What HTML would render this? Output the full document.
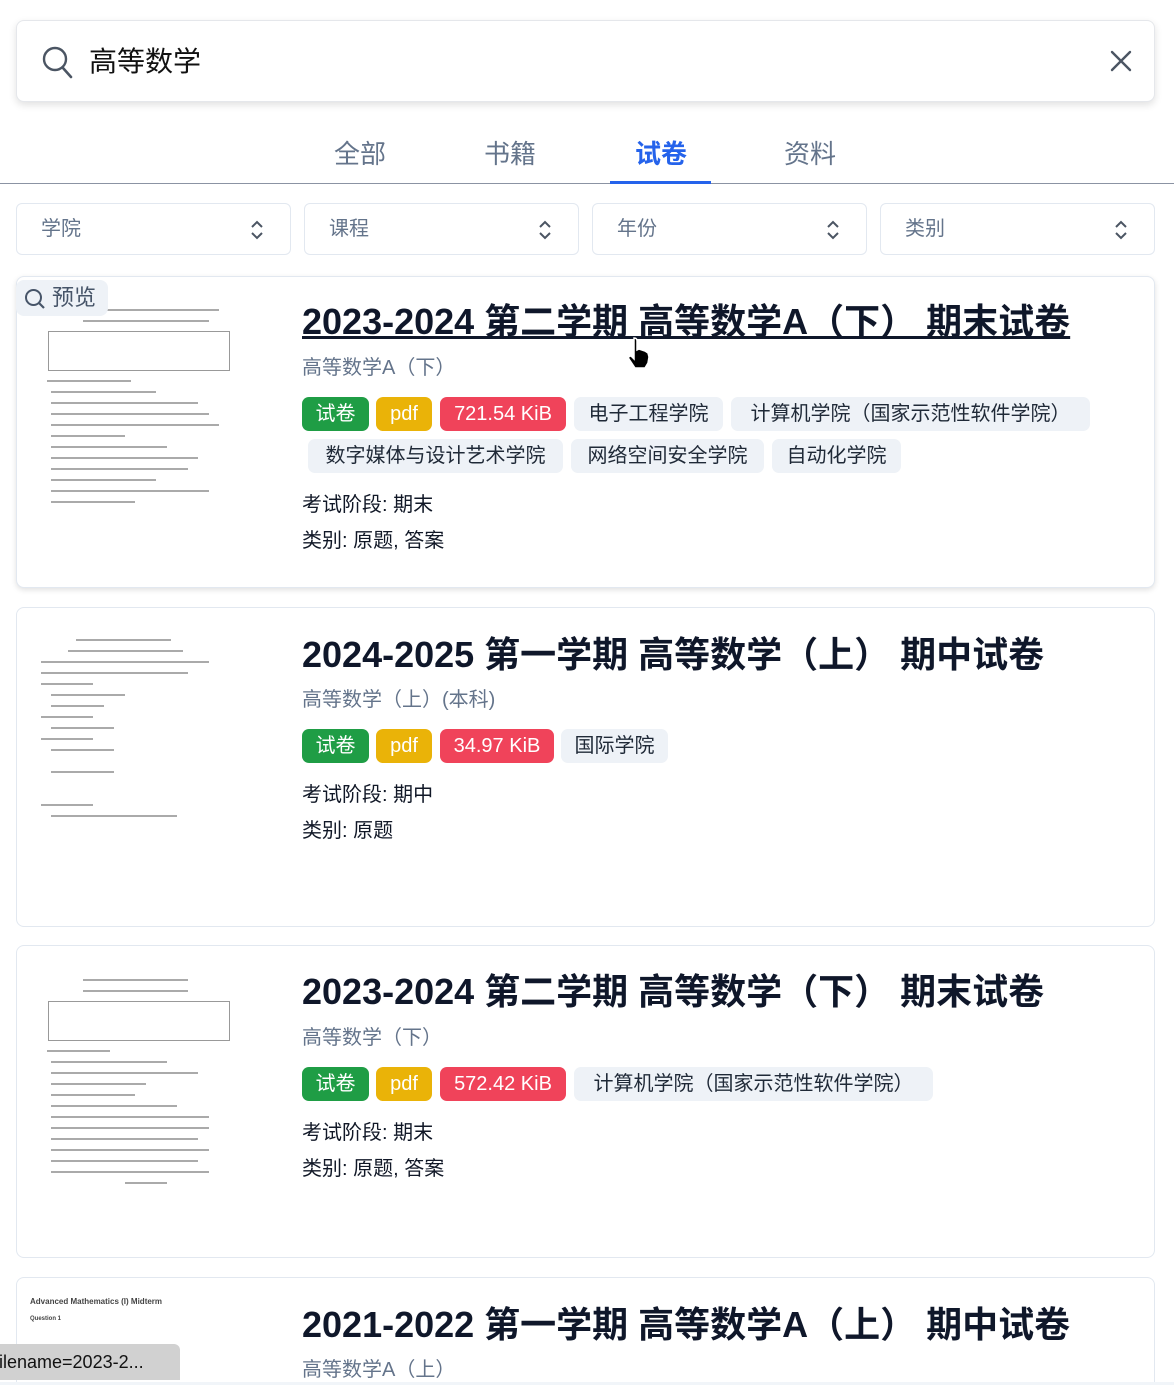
<!DOCTYPE html>
<html style="overflow:hidden;height:1385px"><head><meta charset="utf-8"><style>
*{box-sizing:border-box;margin:0;padding:0}
body{width:1174px;height:1385px;overflow:hidden;background:#fff;position:relative;font-family:"Liberation Sans","Noto Sans CJK SC",sans-serif;color:#111827}
.abs{position:absolute}
.search{left:16px;top:20px;width:1139px;height:82px;border:1px solid #e5e7eb;border-radius:8px;box-shadow:0 3px 8px rgba(0,0,0,.12);background:#fff}
.tab{top:136px;font-size:26px;color:#64748b;width:100px;text-align:center;line-height:36px}
.sel{top:203px;height:52px;width:275px;border:1px solid #e2e8f0;border-radius:6px;font-size:20px;color:#64748b;padding-left:24px;line-height:50px}
.sel svg{position:absolute;right:26px;top:16px}
.card{left:16px;width:1139px;border:1px solid #e2e8f0;border-radius:8px;background:#fff;overflow:hidden}
.title{left:302px;font-size:36px;font-weight:bold;color:#0f172a;white-space:nowrap;line-height:44px}
.sub{left:302px;font-size:20px;color:#64748b;line-height:28px;white-space:nowrap}
.tag{height:34px;border-radius:7px;font-size:20px;line-height:34px;text-align:center;white-space:nowrap;background:#eef2f7;color:#1f2937}
.g{background:#1f9d45;color:#fff}.y{background:#eab308;color:#fff}.r{background:#f0435a;color:#fff}
.info{left:302px;font-size:20px;color:#111827;line-height:28px}
.thumb{left:30px;width:210px}
.thumb i{display:block;height:2px;background:#aaa;margin:9px 0}
</style></head><body>

<div class="abs search">
<svg class="abs" style="left:24px;top:24px" width="32" height="34" viewBox="0 0 32 34"><circle cx="14" cy="14" r="11" fill="none" stroke="#4b5563" stroke-width="2.4"/><line x1="22" y1="23" x2="30" y2="32" stroke="#4b5563" stroke-width="2.6" stroke-linecap="round"/></svg>
<div class="abs" style="left:72px;top:22px;font-size:28px;line-height:38px;color:#111">高等数学</div>
<svg class="abs" style="left:1093px;top:29px" width="22" height="22" viewBox="0 0 22 22"><path d="M2 2L20 20M20 2L2 20" stroke="#4b5563" stroke-width="2.4" stroke-linecap="round"/></svg>
</div>

<div class="abs tab" style="left:310px">全部</div>
<div class="abs tab" style="left:460px">书籍</div>
<div class="abs tab" style="left:611px;color:#2563eb;font-weight:bold">试卷</div>
<div class="abs tab" style="left:760px">资料</div>
<div class="abs" style="left:0;top:183px;width:1174px;height:1px;background:#8b93a3"></div>
<div class="abs" style="left:610px;top:181px;width:101px;height:3px;background:#2563eb"></div>

<div class="abs sel" style="left:16px">学院<svg width="14" height="20" viewBox="0 0 14 20"><path d="M2 7L7 2L12 7M2 13L7 18L12 13" fill="none" stroke="#4b5563" stroke-width="2"/></svg></div>
<div class="abs sel" style="left:304px">课程<svg width="14" height="20" viewBox="0 0 14 20"><path d="M2 7L7 2L12 7M2 13L7 18L12 13" fill="none" stroke="#4b5563" stroke-width="2"/></svg></div>
<div class="abs sel" style="left:592px">年份<svg width="14" height="20" viewBox="0 0 14 20"><path d="M2 7L7 2L12 7M2 13L7 18L12 13" fill="none" stroke="#4b5563" stroke-width="2"/></svg></div>
<div class="abs sel" style="left:880px">类别<svg width="14" height="20" viewBox="0 0 14 20"><path d="M2 7L7 2L12 7M2 13L7 18L12 13" fill="none" stroke="#4b5563" stroke-width="2"/></svg></div>

<!-- card 1 -->
<div class="abs card" style="top:276px;height:312px;box-shadow:0 2px 6px rgba(0,0,0,.12)"></div>
<div class="abs thumb" style="top:300px"><i style="width:60%;margin-left:30%"></i><i style="width:60%;margin-left:25%"></i><div style="border:1px solid #999;height:40px;margin:4px 10px 4px 18px"></div><i style="width:40%;margin-left:8%"></i><i style="width:50%;margin-left:10%"></i><i style="width:70%;margin-left:10%"></i><i style="width:75%;margin-left:10%"></i><i style="width:80%;margin-left:10%"></i><i style="width:35%;margin-left:10%"></i><i style="width:55%;margin-left:10%"></i><i style="width:70%;margin-left:10%"></i><i style="width:65%;margin-left:10%"></i><i style="width:50%;margin-left:10%"></i><i style="width:75%;margin-left:10%"></i><i style="width:40%;margin-left:10%"></i></div>
<div class="abs" style="left:16px;top:280px;width:92px;height:36px;background:#eef2f7;border-radius:8px;font-size:22px;color:#475569;line-height:36px;padding-left:36px">预览<svg class="abs" style="left:8px;top:8px" width="22" height="22" viewBox="0 0 22 22"><circle cx="9.5" cy="9.5" r="7.5" fill="none" stroke="#475569" stroke-width="2"/><line x1="15" y1="15" x2="20" y2="20" stroke="#475569" stroke-width="2.2"/></svg></div>
<div class="abs title" style="top:300px;text-decoration:underline;text-decoration-thickness:3px">2023-2024 第二学期 高等数学A（下） 期末试卷</div>
<svg class="abs" style="left:626px;top:336px" width="28" height="34" viewBox="0 0 28 34"><path d="M8 2c2 0 3 1 3 3v9l2-1 3 1 3 1 3 2 1 4-1 6-3 5H9l-6-9c-1-2 0-3 2-3l3 3V5c0-2 0-3 0-3z" fill="#000" stroke="#fff" stroke-width="1.5"/></svg>
<div class="abs sub" style="top:354px">高等数学A（下）</div>
<div class="abs tag g" style="left:302px;top:397px;width:67px">试卷</div>
<div class="abs tag y" style="left:376px;top:397px;width:56px">pdf</div>
<div class="abs tag r" style="left:440px;top:397px;width:126px">721.54 KiB</div>
<div class="abs tag" style="left:574px;top:397px;width:149px">电子工程学院</div>
<div class="abs tag" style="left:731px;top:397px;width:359px">计算机学院（国家示范性软件学院）</div>
<div class="abs tag" style="left:308px;top:439px;width:255px">数字媒体与设计艺术学院</div>
<div class="abs tag" style="left:571px;top:439px;width:193px">网络空间安全学院</div>
<div class="abs tag" style="left:772px;top:439px;width:129px">自动化学院</div>
<div class="abs info" style="top:491px">考试阶段: 期末</div>
<div class="abs info" style="top:527px">类别: 原题, 答案</div>

<!-- card 2 -->
<div class="abs card" style="top:607px;height:320px"></div>
<div class="abs thumb" style="top:630px"><i style="width:45%;margin-left:22%"></i><i style="width:55%;margin-left:18%"></i><i style="width:80%;margin-left:5%"></i><i style="width:70%;margin-left:5%"></i><i style="width:25%;margin-left:5%"></i><i style="width:35%;margin-left:10%"></i><i style="width:25%;margin-left:10%"></i><i style="width:25%;margin-left:5%"></i><i style="width:30%;margin-left:10%"></i><i style="width:25%;margin-left:5%"></i><i style="width:30%;margin-left:10%"></i><i style="width:0"></i><i style="width:30%;margin-left:10%"></i><i style="width:0"></i><i style="width:0"></i><i style="width:25%;margin-left:5%"></i><i style="width:60%;margin-left:10%"></i></div>
<div class="abs title" style="top:633px">2024-2025 第一学期 高等数学（上） 期中试卷</div>
<div class="abs sub" style="top:686px">高等数学（上）(本科)</div>
<div class="abs tag g" style="left:302px;top:729px;width:67px">试卷</div>
<div class="abs tag y" style="left:376px;top:729px;width:56px">pdf</div>
<div class="abs tag r" style="left:440px;top:729px;width:114px">34.97 KiB</div>
<div class="abs tag" style="left:561px;top:729px;width:107px">国际学院</div>
<div class="abs info" style="top:781px">考试阶段: 期中</div>
<div class="abs info" style="top:817px">类别: 原题</div>

<!-- card 3 -->
<div class="abs card" style="top:945px;height:313px"></div>
<div class="abs thumb" style="top:970px"><i style="width:50%;margin-left:25%"></i><i style="width:50%;margin-left:25%"></i><div style="border:1px solid #999;height:40px;margin:4px 10px 4px 18px"></div><i style="width:30%;margin-left:8%"></i><i style="width:55%;margin-left:10%"></i><i style="width:70%;margin-left:10%"></i><i style="width:45%;margin-left:10%"></i><i style="width:40%;margin-left:10%"></i><i style="width:60%;margin-left:10%"></i><i style="width:75%;margin-left:10%"></i><i style="width:75%;margin-left:10%"></i><i style="width:70%;margin-left:10%"></i><i style="width:75%;margin-left:10%"></i><i style="width:70%;margin-left:10%"></i><i style="width:75%;margin-left:10%"></i><i style="width:20%;margin-left:45%"></i></div>
<div class="abs title" style="top:970px">2023-2024 第二学期 高等数学（下） 期末试卷</div>
<div class="abs sub" style="top:1024px">高等数学（下）</div>
<div class="abs tag g" style="left:302px;top:1067px;width:67px">试卷</div>
<div class="abs tag y" style="left:376px;top:1067px;width:56px">pdf</div>
<div class="abs tag r" style="left:440px;top:1067px;width:126px">572.42 KiB</div>
<div class="abs tag" style="left:574px;top:1067px;width:359px">计算机学院（国家示范性软件学院）</div>
<div class="abs info" style="top:1119px">考试阶段: 期末</div>
<div class="abs info" style="top:1155px">类别: 原题, 答案</div>

<!-- card 4 -->
<div class="abs card" style="top:1277px;height:108px;border-bottom:none;border-radius:8px 8px 0 0"></div>
<div class="abs" style="left:30px;top:1297px;font-size:8px;font-weight:bold;color:#444">Advanced Mathematics (I) Midterm</div>
<div class="abs" style="left:30px;top:1316px;font-size:6px;font-weight:bold;color:#444">Question 1</div>
<div class="abs title" style="top:1303px">2021-2022 第一学期 高等数学A（上） 期中试卷</div>
<div class="abs sub" style="top:1356px">高等数学A（上）</div>
<div class="abs" style="left:0;top:1382px;width:1174px;height:3px;background:#f1f5f9"></div>
<div class="abs" style="left:-6px;top:1344px;width:186px;height:36px;background:#d1d1d1;border-radius:0 6px 0 0;font-size:18px;line-height:36px;color:#111;white-space:nowrap;overflow:hidden">filename=2023-2...</div>
</body></html>
